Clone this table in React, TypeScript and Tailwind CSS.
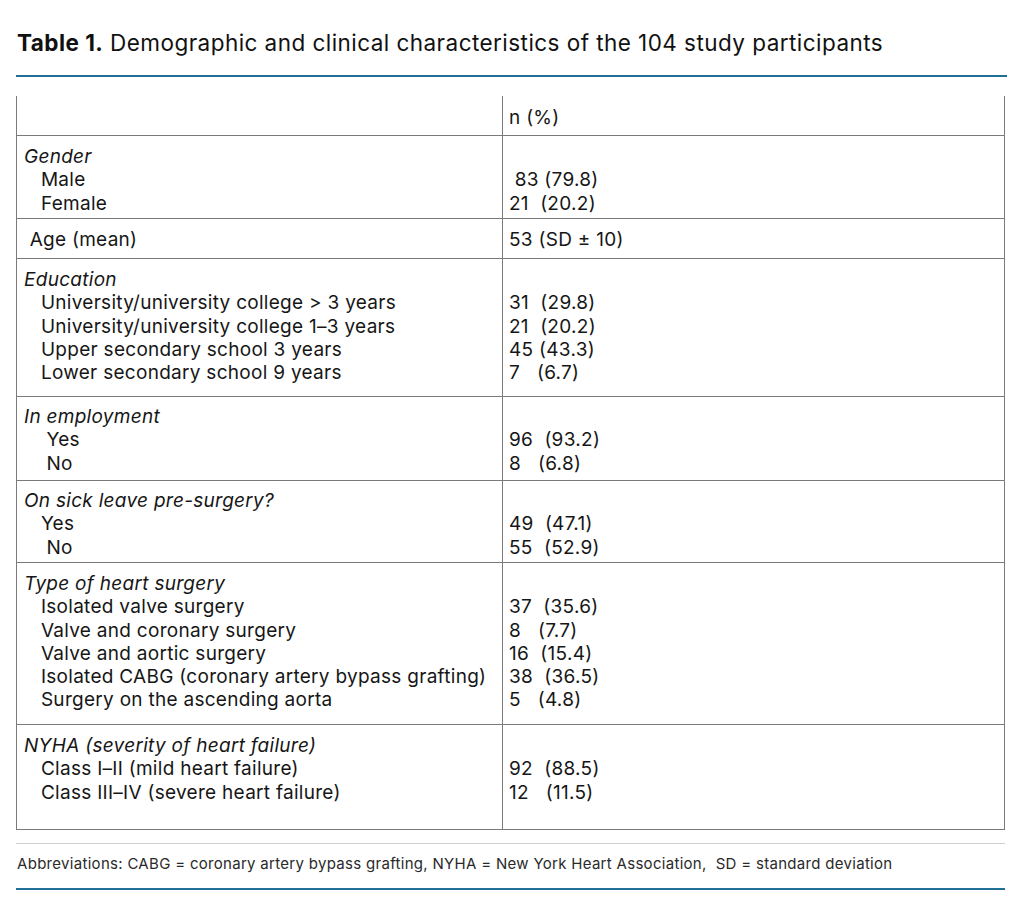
import React from "react";

type Row = { h: string; left: { t: string; i?: boolean }[]; right: string[]; pt?: string };

const rows: Row[] = [
  { h: "h-[83px]", left: [{ t: "Gender", i: true }, { t: "   Male" }, { t: "   Female" }], right: ["", " 83 (79.8)", "21  (20.2)"] },
  { h: "h-[40px]", left: [{ t: " Age (mean)" }], right: ["53 (SD ± 10)"] },
  {
    h: "h-[138px]",
    left: [
      { t: "Education", i: true },
      { t: "   University/university college > 3 years" },
      { t: "   University/university college 1–3 years" },
      { t: "   Upper secondary school 3 years" },
      { t: "   Lower secondary school 9 years" },
    ],
    right: ["", "31  (29.8)", "21  (20.2)", "45 (43.3)", "7   (6.7)"],
  },
  { h: "h-[84px]", left: [{ t: "In employment", i: true }, { t: "    Yes" }, { t: "    No" }], right: ["", "96  (93.2)", "8   (6.8)"], pt: "pt-[8px]" },
  { h: "h-[82px]", left: [{ t: "On sick leave pre-surgery?", i: true }, { t: "   Yes" }, { t: "    No" }], right: ["", "49  (47.1)", "55  (52.9)"], pt: "pt-[8px]" },
  {
    h: "h-[162px]",
    left: [
      { t: "Type of heart surgery", i: true },
      { t: "   Isolated valve surgery" },
      { t: "   Valve and coronary surgery" },
      { t: "   Valve and aortic surgery" },
      { t: "   Isolated CABG (coronary artery bypass grafting)" },
      { t: "   Surgery on the ascending aorta" },
    ],
    right: ["", "37  (35.6)", "8   (7.7)", "16  (15.4)", "38  (36.5)", "5   (4.8)"],
  },
  {
    h: "h-[105px]",
    left: [
      { t: "NYHA (severity of heart failure)", i: true },
      { t: "   Class I–II (mild heart failure)" },
      { t: "   Class III–IV (severe heart failure)" },
    ],
    right: ["", "92  (88.5)", "12   (11.5)"],
  },
];

export default function App() {
  return (
    <div className="w-[1024px] h-[908px] bg-white font-['Inter','Liberation_Sans',sans-serif] text-[#161616]">
      <div className="pl-4 w-[1006px] pt-[29px]">
        <div className="text-[22.5px] leading-[28px] tracking-[0.02em] text-[#111] pl-px">
          <span className="font-bold">Table 1.</span> Demographic and clinical characteristics of the 104 study participants
        </div>
        <div className="mt-[18px] h-[2px] bg-[#1f6f96] w-[991px]" />
        <div className="mt-[19px] w-[989px] border-l border-r border-[#7a7a7a] text-[19px] leading-[23.3px] tracking-[0.015em]">
          <div className="grid grid-cols-[486px_1fr] h-[40px] border-b border-[#7a7a7a]">
            <div className="border-r border-[#7a7a7a]" />
            <div className="pl-[6px] pt-[10px]">n (%)</div>
          </div>
          {rows.map((r, idx) => (
            <div key={idx} className={`grid grid-cols-[486px_1fr] border-b border-[#7a7a7a] ${r.h}`}>
              <div className={`border-r border-[#7a7a7a] pl-[7px] ${r.pt ?? "pt-[9px]"}`}>
                {r.left.map((l, j) => (
                  <div key={j} className={`whitespace-pre h-[23.3px] ${l.i ? "italic" : ""}`}>
                    {l.t}
                  </div>
                ))}
              </div>
              <div className={`pl-[6px] ${r.pt ?? "pt-[9px]"}`}>
                {r.right.map((t, j) => (
                  <div key={j} className="whitespace-pre h-[23.3px]">
                    {t}
                  </div>
                ))}
              </div>
            </div>
          ))}
        </div>
        <div className="mt-[13px] h-px bg-[#cfcfcf] w-[989px]" />
        <div className="mt-[10px] text-[15px] leading-[20px] tracking-[0.02em] text-[#2a2a2a] pl-px whitespace-pre">
          Abbreviations: CABG = coronary artery bypass grafting, NYHA = New York Heart Association,  SD = standard deviation
        </div>
        <div className="mt-[14px] h-[2px] bg-[#1f6f96] w-[989px]" />
      </div>
    </div>
  );
}
